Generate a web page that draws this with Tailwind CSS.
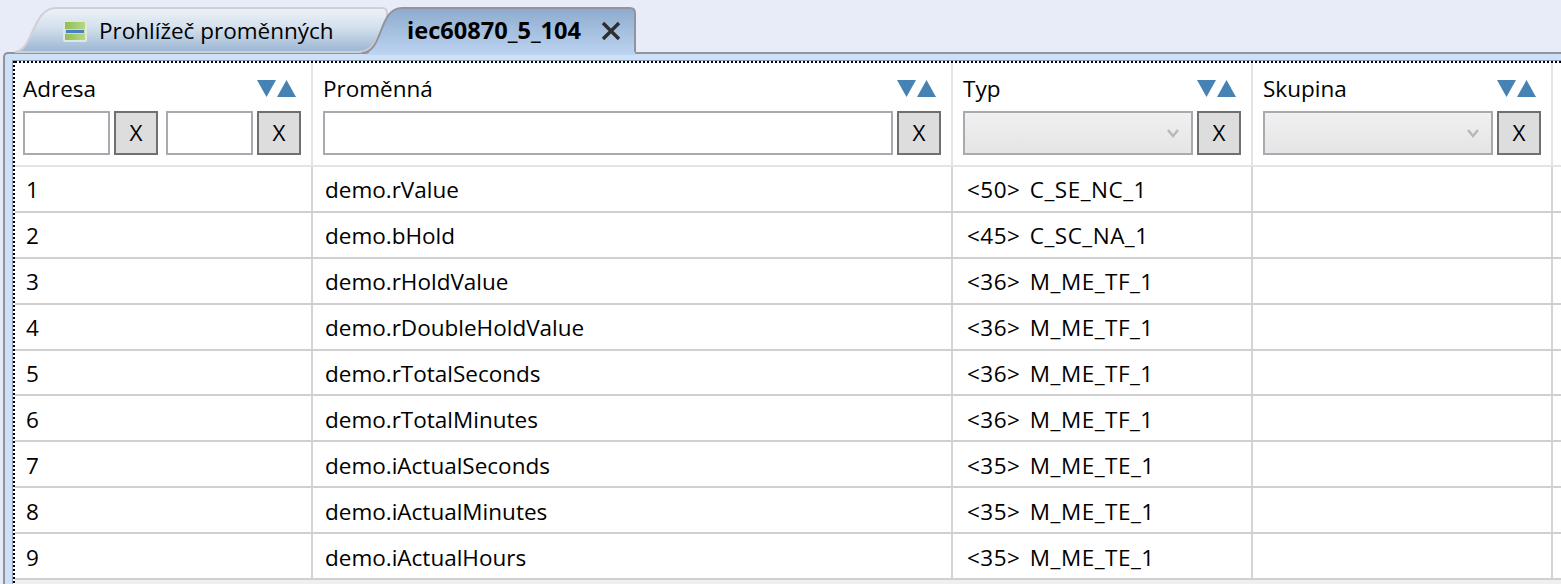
<!DOCTYPE html>
<html lang="en">
<head>
  <meta charset="UTF-8">
  <title>iec60870_5_104</title>
  <script src="https://cdn.jsdelivr.net/npm/@tailwindcss/browser@4"></script>
</head>
<body class="bg-[#e8ebf8] text-black overflow-hidden font-['Open_Sans',sans-serif] text-[22.5px] leading-none">
  <div class="w-[1561px] h-[584px] flex flex-col overflow-hidden">
    <!-- tabs -->
    <div class="relative h-[52px] shrink-0 z-10">
      <svg class="absolute left-0 top-0" width="660" height="58" viewBox="0 0 660 58">
        <defs>
          <linearGradient id="t1" x1="0" y1="0" x2="0" y2="1"><stop offset="0" stop-color="#eef2f8"/><stop offset="0.45" stop-color="#d3e0ec"/><stop offset="1" stop-color="#9ab5d3"/></linearGradient>
          <linearGradient id="t2" x1="0" y1="0" x2="0" y2="1"><stop offset="0" stop-color="#8dabcd"/><stop offset="1" stop-color="#bdd4f2"/></linearGradient>
          <linearGradient id="g1" x1="0" y1="0" x2="1" y2="0"><stop offset="0" stop-color="#8fbf4e"/><stop offset="1" stop-color="#b9d68c"/></linearGradient>
        </defs>
        <path d="M15 52 C34 50 32 8 56 8 L382 8 Q387 8 387 13 L387 20 C378 30 378 52 358 52 Z" fill="url(#t1)" stroke="#d0d0d4" stroke-width="2"/>
        <path d="M362 55 C384 54 378 8 402 8 L630 8 Q635 8 635 13 L635 55 Z" fill="url(#t2)"/>
        <path d="M362 53 C384 52 378 8 402 8 L630 8 Q635 8 635 13 L635 52" fill="none" stroke="#92939e" stroke-width="2"/>
      </svg>
      <div class="relative flex items-center h-[45px] mt-[7px] pt-[3px]">
        <svg class="ml-[63px] w-[24px] h-[22px]" viewBox="0 0 24 22">
          <rect x="0" y="0" width="24" height="22" rx="2" fill="#dfe9e2"/>
          <rect x="2" y="2" width="20" height="7" fill="url(#g1)"/>
          <rect x="2" y="9" width="20" height="5" fill="#cfdcc4"/>
          <rect x="3" y="10" width="18" height="3" fill="#4a80c4"/>
          <rect x="2" y="14" width="20" height="6" fill="url(#g1)"/>
        </svg>
        <span class="ml-[12px] w-[308px] whitespace-nowrap">Prohlížeč proměnných</span>
        <span class="font-bold text-[23.6px]">iec60870_5_104</span>
        <svg class="ml-[20px]" width="20" height="20" viewBox="0 0 20 20"><path d="M2 2 L18 18 M18 2 L2 18" stroke="#2e2e2e" stroke-width="3.4"/></svg>
      </div>
    </div>

    <!-- panel -->
    <div class="flex-1 ml-[3px] rounded-tl-[5px] border-t-2 border-l-2 border-[#92939e] bg-[#cde0f5] pt-[6px] pl-[7px] min-h-0">
      <div class="h-full flex border-t border-l border-[#8b9cb5]">
        <div class="w-[2px] shrink-0 bg-white bg-[repeating-linear-gradient(180deg,#000_0_2px,transparent_2px_4px)]"></div>
        <div class="flex-1 min-w-0 bg-[#efefef]">
          <div class="h-[2px] bg-white bg-[repeating-linear-gradient(90deg,#000_0_2px,transparent_2px_4px)]"></div>
          <!-- header -->
          <div class="grid grid-cols-[298px_640px_300px_300px_1fr] bg-white h-[104px] border-b-2 border-[#e4e4e4]">
            <div class="border-r-2 border-[#e4e4e4] pl-[8px] pr-[10px] pt-[14px]">
              <div class="flex justify-between items-center h-[24px]">
                <span>Adresa</span>
                <span class="flex gap-[1px] mr-[5px] -mt-[1px]">
                  <svg width="19" height="17" viewBox="0 0 19 17"><path d="M0 0H19L9.5 17Z" fill="#4682b4"/></svg>
                  <svg width="19" height="17" viewBox="0 0 19 17"><path d="M0 17H19L9.5 0Z" fill="#4682b4"/></svg>
                </span>
              </div>
              <div class="flex mt-[10px]">
                <div class="w-[87px] h-[44px] border-2 border-[#a9a9b0] bg-white"></div>
                <div class="ml-[4px] w-[44px] h-[44px] border-2 border-[#707070] bg-[#dddddd] flex items-center justify-center">X</div>
                <div class="ml-[8px] w-[87px] h-[44px] border-2 border-[#a9a9b0] bg-white"></div>
                <div class="ml-[4px] w-[44px] h-[44px] border-2 border-[#707070] bg-[#dddddd] flex items-center justify-center">X</div>
              </div>
            </div>
            <div class="border-r-2 border-[#e4e4e4] pl-[10px] pr-[10px] pt-[14px]">
              <div class="flex justify-between items-center h-[24px]">
                <span>Proměnná</span>
                <span class="flex gap-[1px] mr-[5px] -mt-[1px]">
                  <svg width="19" height="17" viewBox="0 0 19 17"><path d="M0 0H19L9.5 17Z" fill="#4682b4"/></svg>
                  <svg width="19" height="17" viewBox="0 0 19 17"><path d="M0 17H19L9.5 0Z" fill="#4682b4"/></svg>
                </span>
              </div>
              <div class="flex mt-[10px]">
                <div class="w-[570px] h-[44px] border-2 border-[#a9a9b0] bg-white"></div>
                <div class="ml-[4px] w-[44px] h-[44px] border-2 border-[#707070] bg-[#dddddd] flex items-center justify-center">X</div>
              </div>
            </div>
            <div class="border-r-2 border-[#e4e4e4] pl-[10px] pr-[10px] pt-[14px]">
              <div class="flex justify-between items-center h-[24px]">
                <span>Typ</span>
                <span class="flex gap-[1px] mr-[5px] -mt-[1px]">
                  <svg width="19" height="17" viewBox="0 0 19 17"><path d="M0 0H19L9.5 17Z" fill="#4682b4"/></svg>
                  <svg width="19" height="17" viewBox="0 0 19 17"><path d="M0 17H19L9.5 0Z" fill="#4682b4"/></svg>
                </span>
              </div>
              <div class="flex mt-[10px]">
                <div class="w-[230px] h-[44px] border-2 border-[#a9a9b0] bg-linear-to-b from-[#f0f0f0] to-[#e5e5e5] flex items-center justify-end pr-[12px]">
                  <svg width="12" height="9" viewBox="0 0 12 9"><path d="M1 1 L6 7 L11 1" fill="none" stroke="#b8b8b8" stroke-width="2.5"/></svg>
                </div>
                <div class="ml-[4px] w-[44px] h-[44px] border-2 border-[#707070] bg-[#dddddd] flex items-center justify-center">X</div>
              </div>
            </div>
            <div class="border-r-2 border-[#e4e4e4] pl-[10px] pr-[10px] pt-[14px]">
              <div class="flex justify-between items-center h-[24px]">
                <span>Skupina</span>
                <span class="flex gap-[1px] mr-[5px] -mt-[1px]">
                  <svg width="19" height="17" viewBox="0 0 19 17"><path d="M0 0H19L9.5 17Z" fill="#4682b4"/></svg>
                  <svg width="19" height="17" viewBox="0 0 19 17"><path d="M0 17H19L9.5 0Z" fill="#4682b4"/></svg>
                </span>
              </div>
              <div class="flex mt-[10px]">
                <div class="w-[230px] h-[44px] border-2 border-[#a9a9b0] bg-linear-to-b from-[#f0f0f0] to-[#e5e5e5] flex items-center justify-end pr-[12px]">
                  <svg width="12" height="9" viewBox="0 0 12 9"><path d="M1 1 L6 7 L11 1" fill="none" stroke="#b8b8b8" stroke-width="2.5"/></svg>
                </div>
                <div class="ml-[4px] w-[44px] h-[44px] border-2 border-[#707070] bg-[#dddddd] flex items-center justify-center">X</div>
              </div>
            </div>
            <div></div>
          </div>
          <!-- rows -->
          <div id="rows"></div>
        </div>
      </div>
    </div>
  </div>
  <script>
    const data = [
      ['1', 'demo.rValue', '<50> C_SE_NC_1'],
      ['2', 'demo.bHold', '<45> C_SC_NA_1'],
      ['3', 'demo.rHoldValue', '<36> M_ME_TF_1'],
      ['4', 'demo.rDoubleHoldValue', '<36> M_ME_TF_1'],
      ['5', 'demo.rTotalSeconds', '<36> M_ME_TF_1'],
      ['6', 'demo.rTotalMinutes', '<36> M_ME_TF_1'],
      ['7', 'demo.iActualSeconds', '<35> M_ME_TE_1'],
      ['8', 'demo.iActualMinutes', '<35> M_ME_TE_1'],
      ['9', 'demo.iActualHours', '<35> M_ME_TE_1'],
    ];
    const esc = s => s.replace(/</g, '&lt;').replace(/>/g, '&gt;');
    document.getElementById('rows').innerHTML = data.map((r, i) => {
      const h = i === 4 ? 'h-[45px]' : 'h-[46px]';
      const pt = i < 4 ? 'pt-[2px]' : 'pt-[4px]';
      return `
      <div class="grid grid-cols-[298px_640px_300px_300px_1fr] ${h} bg-white border-b-2 border-[#d0d0d0]">
        <div class="border-r-2 border-[#d4d4d4] pl-[11px] ${pt} flex items-center">${r[0]}</div>
        <div class="border-r-2 border-[#d4d4d4] pl-[12px] ${pt} flex items-center">${r[1]}</div>
        <div class="border-r-2 border-[#d4d4d4] pl-[14px] ${pt} flex items-center tracking-[0.5px] [word-spacing:3px]">${esc(r[2])}</div>
        <div class="border-r-2 border-[#d4d4d4]"></div>
        <div></div>
      </div>`;
    }).join('');
  </script>
</body>
</html>
